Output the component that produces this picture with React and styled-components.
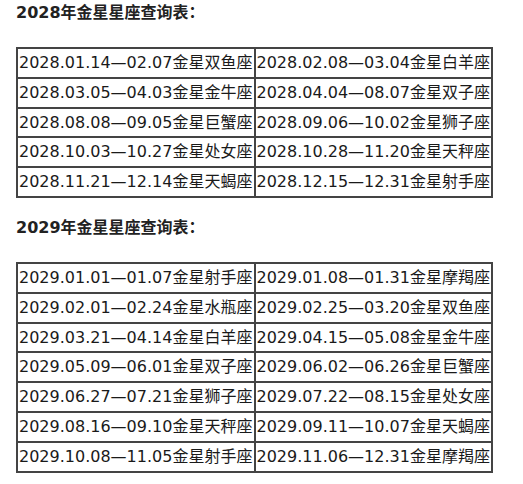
import React from "react";
import styled, { createGlobalStyle } from "styled-components";

const GlobalStyle = createGlobalStyle`
  html, body { margin: 0; padding: 0; background: #fff; }
  body { font-family: "DejaVu Sans", "Noto Sans CJK SC", sans-serif; color: #222; }
`;

const Page = styled.div`
  padding: 0 16px;
  width: 477px;
`;

const Section = styled.section`
  margin-bottom: 17px;
`;

const Heading = styled.p`
  margin: 0 0 21px;
  font-size: 16px;
  font-weight: bold;
  line-height: 26px;
  color: #222;
`;

const Table = styled.table`
  width: 477px;
  table-layout: fixed;
  border-collapse: separate;
  border-spacing: 0;
  border: 1px solid #444;
`;

const Cell = styled.td`
  border: 1px solid #444;
  padding: 0 1px;
  height: 27.8px;
  line-height: 27.8px;
  font-size: 16px;
  white-space: nowrap;
  color: #1a1a1a;
`;

const data = [
  {
    title: "2028年金星星座查询表：",
    rows: [
      ["2028.01.14—02.07金星双鱼座", "2028.02.08—03.04金星白羊座"],
      ["2028.03.05—04.03金星金牛座", "2028.04.04—08.07金星双子座"],
      ["2028.08.08—09.05金星巨蟹座", "2028.09.06—10.02金星狮子座"],
      ["2028.10.03—10.27金星处女座", "2028.10.28—11.20金星天秤座"],
      ["2028.11.21—12.14金星天蝎座", "2028.12.15—12.31金星射手座"],
    ],
  },
  {
    title: "2029年金星星座查询表：",
    rows: [
      ["2029.01.01—01.07金星射手座", "2029.01.08—01.31金星摩羯座"],
      ["2029.02.01—02.24金星水瓶座", "2029.02.25—03.20金星双鱼座"],
      ["2029.03.21—04.14金星白羊座", "2029.04.15—05.08金星金牛座"],
      ["2029.05.09—06.01金星双子座", "2029.06.02—06.26金星巨蟹座"],
      ["2029.06.27—07.21金星狮子座", "2029.07.22—08.15金星处女座"],
      ["2029.08.16—09.10金星天秤座", "2029.09.11—10.07金星天蝎座"],
      ["2029.10.08—11.05金星射手座", "2029.11.06—12.31金星摩羯座"],
    ],
  },
];

export default function App() {
  return (
    <>
      <GlobalStyle />
      <Page>
        {data.map((sec) => (
          <Section key={sec.title}>
            <Heading>{sec.title}</Heading>
            <Table>
              <tbody>
                {sec.rows.map((r, i) => (
                  <tr key={i}>
                    {r.map((c) => (
                      <Cell key={c}>{c}</Cell>
                    ))}
                  </tr>
                ))}
              </tbody>
            </Table>
          </Section>
        ))}
      </Page>
    </>
  );
}
